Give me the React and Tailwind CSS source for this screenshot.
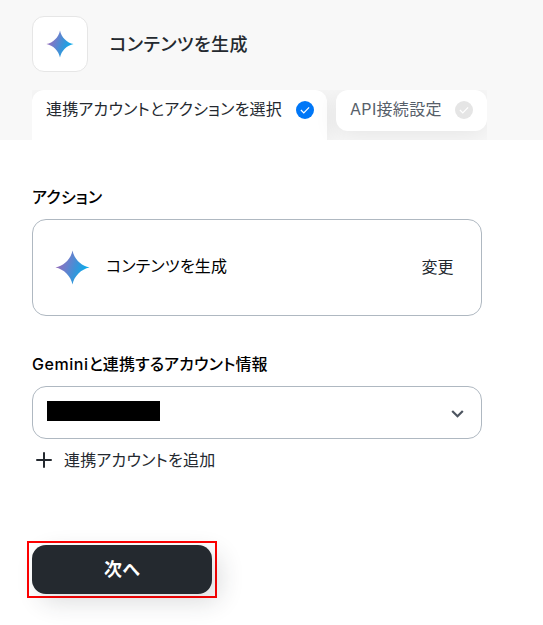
import React from 'react';

const GeminiStar = ({ id, size }) => (
    <svg width={size} height={size} viewBox="0 0 28 28" fill="none" aria-hidden="true">
        <path
            d="M14 27.6C12.8 21 7 15.2 0.4 14C7 12.8 12.8 7 14 0.4C15.2 7 21 12.8 27.6 14C21 15.2 15.2 21 14 27.6Z"
            fill={`url(#${id})`}
        />
        <defs>
            <linearGradient id={id} x1="1" y1="10" x2="24" y2="18" gradientUnits="userSpaceOnUse">
                <stop stopColor="#9b6bb8" />
                <stop offset="0.35" stopColor="#6c7fcc" />
                <stop offset="0.65" stopColor="#3d92d8" />
                <stop offset="1" stopColor="#0faaea" />
            </linearGradient>
        </defs>
    </svg>
);

const CheckBadge = ({ className = '' }) => (
    <svg width="18" height="18" viewBox="0 0 18 18" fill="none" className={`shrink-0 ${className}`} aria-hidden="true">
        <circle cx="9" cy="9" r="9" fill="currentColor" />
        <path d="M4.9 9L7.8 12L13.1 6.3" stroke="white" strokeWidth="1.2" />
    </svg>
);

const Header = () => (
    <header className="h-[140px] bg-[#f8f8f8] pt-4 pl-8">
        <div className="flex items-center">
            <div className="flex h-14 w-14 items-center justify-center rounded-[12px] border border-[#e6e6e6] bg-white">
                <GeminiStar id="star-header" size={28} />
            </div>
            <h1 className="mt-[2px] ml-[21.5px] text-[18px] leading-7 font-medium tracking-[0.027em] text-[#24292f]">
                コンテンツを生成
            </h1>
        </div>
        <div className="mt-[18px] flex h-[50px] w-[455px] items-start gap-[9px] overflow-hidden">
            <div className="flex h-[50px] w-[295px] shrink-0 justify-between rounded-t-[12px] bg-white pt-[11px] pr-[13px] pl-[14px] shadow-[0_4px_24px_rgba(0,0,0,0.08)]">
                <span className="h-5 text-[16px] leading-4 whitespace-nowrap text-[#24292f]">連携アカウントとアクションを選択</span>
                <CheckBadge className="text-[#0077f7]" />
            </div>
            <div className="flex h-[41px] w-[151px] shrink-0 justify-between rounded-[12px] bg-white pt-[11px] pr-[14px] pl-[14px] shadow-[0_4px_24px_rgba(0,0,0,0.08)]">
                <span className="h-5 text-[16px] leading-4 tracking-[0.02em] whitespace-nowrap text-[#57606a]">API接続設定</span>
                <CheckBadge className="text-[#e5e5e5]" />
            </div>
        </div>
    </header>
);

const App = () => (
    <div
        className="h-[625px] w-[543px] overflow-hidden bg-white tracking-[0.012em] text-black"
        style={{ fontFamily: 'Inter, "Noto Sans CJK JP", sans-serif', fontFeatureSettings: '"palt"' }}
    >
        <Header />
        <main className="w-[482px] pt-[45px] pl-8">
            <h2 className="text-[16px] leading-6 font-medium">アクション</h2>
            <section className="mt-[10px] flex h-[97px] items-center rounded-[14px] border border-[#afb8c1] pr-[27.5px] pl-[22px]">
                <GeminiStar id="star-action" size={35} />
                <span className="-mt-1 ml-4 text-[16px] leading-6">コンテンツを生成</span>
                <button type="button" className="-mt-[2px] ml-auto text-[16px] leading-6 tracking-normal text-[#24292f]">
                    変更
                </button>
            </section>

            <h2 className="mt-9 text-[16px] leading-6 font-medium tracking-[0.008em]">
                <span className="font-[450] tracking-[0.035em]">Gemini</span>
                と連携するアカウント情報
            </h2>
            <div className="mt-[10px] flex h-[53px] items-center justify-between rounded-[14px] border border-[#afb8c1] pr-[17px] pl-[14px]">
                <div className="mb-[3px] h-5 w-[113px] bg-black" />
                <svg width="13" height="10" viewBox="0 0 13 10" fill="none" className="mt-[3px]" aria-hidden="true">
                    <path d="M1.2 2L6.5 7.3L11.8 2" stroke="#4d5560" strokeWidth="2.2" />
                </svg>
            </div>

            <button type="button" className="mt-[9px] flex items-center pl-1 text-[16px] leading-6 text-[#24292f]">
                <svg width="16" height="16" viewBox="0 0 16 16" fill="none" aria-hidden="true">
                    <path d="M8 1V15M1 8H15" stroke="#24292f" strokeWidth="2" strokeLinecap="round" />
                </svg>
                <span className="ml-3">連携アカウントを追加</span>
            </button>

            <div className="mt-[69px] -ml-[5px] h-[57px] w-[190px] border-2 border-[#ff0000] px-[3px] py-[2px]">
                <button
                    type="button"
                    className="h-[49px] w-[180px] rounded-[14px] bg-[#24292f] text-[18px] font-bold text-white shadow-[8px_8px_24px_rgba(36,41,47,0.16)]"
                >
                    次へ
                </button>
            </div>
        </main>
    </div>
);

export default App;
